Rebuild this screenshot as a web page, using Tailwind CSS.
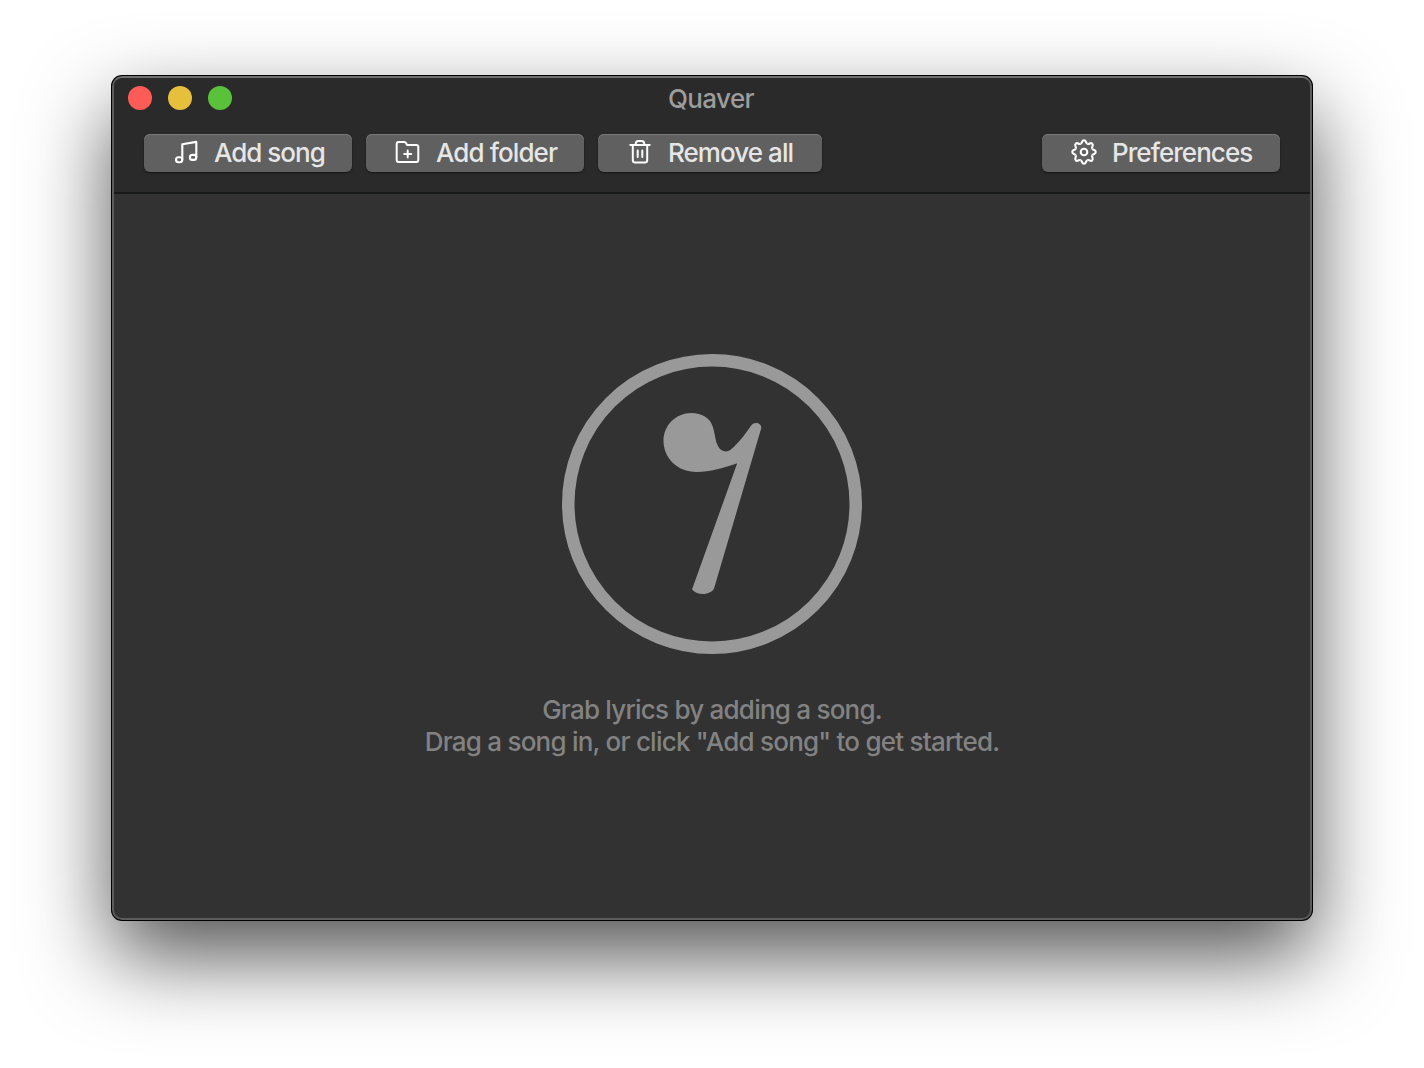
<!DOCTYPE html>
<html lang="en">
<head>
<meta charset="utf-8">
<title>Quaver</title>
<script src="https://cdn.jsdelivr.net/npm/@tailwindcss/browser@4"></script>
</head>
<body class="w-[1424px] h-[1068px] overflow-hidden bg-white px-28 pt-[76px] font-['Inter',sans-serif] text-[26px] font-[450]">
<main class="relative flex h-[844px] w-[1200px] flex-col overflow-hidden rounded-[10px] bg-[#323232] shadow-[0_0_0_1px_#000,0_36px_84px_rgba(0,0,0,0.68)]">
  <header class="flex h-[118px] shrink-0 flex-col border-b-2 border-[#171a19] bg-[#2a2a2a]">
    <div class="grid h-11 grid-cols-3 items-center px-4">
      <div class="flex gap-4">
        <span class="size-6 rounded-full bg-[#ff5c58]"></span>
        <span class="size-6 rounded-full bg-[#e6bf3c]"></span>
        <span class="size-6 rounded-full bg-[#5ac13b]"></span>
      </div>
      <h1 class="pt-0.5 pr-0.5 text-center leading-8 tracking-[-0.6px] text-[#9c9c9c]">Quaver</h1>
    </div>
    <nav class="flex gap-3.5 px-8 pt-3.5 leading-[38px] text-[#e6e6e6]">
      <button class="flex h-[38px] w-[208px] items-center rounded-md bg-[#606060] pl-[26px] shadow-[inset_0_1px_0_#7a7a7a,0_1px_2px_rgba(0,0,0,0.5)]">
        <svg class="mr-2 mb-0.5 size-9 shrink-0" viewBox="0 0 36 36" fill="none" stroke="#fff" stroke-width="2.100" stroke-linejoin="round"><path d="M12.3 25.5V10.3L26.3 7.9V23.2"/><rect x="6" y="23.200" width="6.3" height="5" rx="2.500"/><rect x="19.9" y="20.900" width="6.4" height="5" rx="2.500"/></svg>
        <span class="whitespace-nowrap tracking-[-1px]">Add song</span>
      </button>
      <button class="flex h-[38px] w-[218px] items-center rounded-md bg-[#606060] pl-6 shadow-[inset_0_1px_0_#7a7a7a,0_1px_2px_rgba(0,0,0,0.5)]">
        <svg class="mr-2.5 mb-0.5 size-9 shrink-0" viewBox="0 0 36 36" fill="none" stroke="#fff" stroke-width="2" stroke-linecap="round" stroke-linejoin="round"><path d="M9 8h5.5q1 0 1.5 1l1.1 2h9.2q2 0 2 2v13q0 2-2 2H8.700q-2 0-2-2V10q0-2 2-2zM17.700 16.500v7M14.200 20h7"/></svg>
        <span class="whitespace-nowrap tracking-[-0.9px]">Add folder</span>
      </button>
      <button class="flex h-[38px] w-[224px] items-center rounded-md bg-[#606060] pl-6 shadow-[inset_0_1px_0_#7a7a7a,0_1px_2px_rgba(0,0,0,0.5)]">
        <svg class="mr-2.5 mb-0.5 size-9 shrink-0" viewBox="0 0 36 36" fill="none" stroke="#fff" stroke-width="2" stroke-linecap="round" stroke-linejoin="round"><path d="M8.300 11h19.400M13.800 11V9.500q0-2.500 2.500-2.500h3.400q2.500 0 2.500 2.500V11M10.800 11.500V26q0 2.500 2.500 2.500h9.400q2.500 0 2.500-2.500V11.500M15.700 16.500v6.500M20.300 16.500v6.500"/></svg>
        <span class="whitespace-nowrap tracking-[-0.95px]">Remove all</span>
      </button>
      <button class="ml-auto flex h-[38px] w-[238px] items-center rounded-md bg-[#606060] pl-6 shadow-[inset_0_1px_0_#7a7a7a,0_1px_2px_rgba(0,0,0,0.5)]">
        <svg class="mr-2.5 mb-0.5 size-9 shrink-0" viewBox="0 0 36 36" fill="none" stroke="#fff" stroke-width="2.100">
          <defs><path id="tooth" d="M-3.400-8.210C-1.200-9.100-2.600-11.700 0-11.700S1.200-9.100 3.400-8.210"/></defs>
          <g transform="translate(18 18)"><circle r="3.300"/><use href="#tooth"/><use href="#tooth" transform="rotate(45)"/><use href="#tooth" transform="rotate(90)"/><use href="#tooth" transform="rotate(135)"/><use href="#tooth" transform="rotate(180)"/><use href="#tooth" transform="rotate(225)"/><use href="#tooth" transform="rotate(270)"/><use href="#tooth" transform="rotate(315)"/></g>
        </svg>
        <span class="whitespace-nowrap tracking-[-0.95px]">Preferences</span>
      </button>
    </nav>
  </header>
  <section class="flex flex-col items-center pt-40 text-center text-[#828282]">
    <svg class="size-[300px]" viewBox="0 0 300 300"><circle cx="150" cy="150" r="143.750" fill="none" stroke="#999" stroke-width="12.500"/><path fill="#999" d="M101.500 87C101.500 71 114 59 129.500 59C140 59 147 64 149.700 70C153 77 152.500 84 155.500 91C157.500 95.500 160.500 97.400 164 97.400C167 97.400 169 95.500 171.500 93.300C178.500 86.500 184 79 189.200 71.500C190.500 69.800 192 69 194 69C197 69 199.500 71 199.300 74L152.200 234C151 237.500 146 240 141 240C136.500 240 133 238.500 130 235.500L175.200 109.300C162 114 148 118 134.700 118C115 118 101.500 103.500 101.500 87Z"/></svg>
    <p class="mt-10 whitespace-nowrap leading-8 tracking-[-0.78px]">Grab lyrics by adding a song.<br>Drag a song in, or click "Add song" to get started.</p>
  </section>
  <div class="pointer-events-none absolute inset-0 rounded-[10px] border-2 border-[#5c5c5c] border-t-[#707070]"></div>
</main>
</body>
</html>
